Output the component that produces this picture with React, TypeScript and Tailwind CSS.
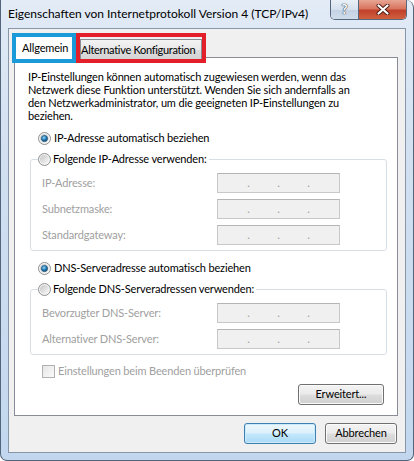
import type { ReactNode } from 'react';

const FONT = "font-['Lato',sans-serif]";

function Radio({ checked = false }: { checked?: boolean }) {
  return (
    <svg width="13" height="13" viewBox="0 0 13 13" className="shrink-0">
      <defs>
        <linearGradient id="radio-well" x1="0" y1="0" x2="1" y2="1">
          <stop offset="0" stopColor="#c4c4c4" />
          <stop offset="1" stopColor="#fbfbfb" />
        </linearGradient>
        <radialGradient id="radio-dot" cx="0.4" cy="0.35" r="0.75">
          <stop offset="0" stopColor="#9fd6f5" />
          <stop offset="0.45" stopColor="#2a86c0" />
          <stop offset="1" stopColor="#0b3555" />
        </radialGradient>
      </defs>
      <circle cx="6.5" cy="6.5" r="6" fill="#f5f5f5" stroke="#8e8f8f" />
      <circle cx="6.5" cy="6.5" r="4.6" fill="url(#radio-well)" />
      {checked && <circle cx="6.5" cy="6.5" r="3.1" fill="url(#radio-dot)" stroke="#174f78" strokeWidth="0.7" />}
    </svg>
  );
}

function IpBox() {
  return (
    <div className="w-[123px] h-[20px] border border-[#c8c8c8] border-t-[#b5b5b5] bg-[#f0f0f0] flex justify-center text-[#a0a0a0] leading-[17px]">
      <span className="w-[30px] text-center">.</span>
      <span className="w-[30px] text-center">.</span>
      <span className="w-[30px] text-center">.</span>
    </div>
  );
}

function Field({ label }: { label: string }) {
  return (
    <div className="flex items-center h-[20px]">
      <span className="w-[186px] pl-[11px] text-[#a0a0a0] whitespace-nowrap">{label}</span>
      <IpBox />
    </div>
  );
}

function Group({ legend, fields }: { legend: string; fields: string[] }) {
  return (
    <fieldset className="ml-[2px] w-[357px] border border-[#d5dfe5] rounded-[3px] min-w-0">
      <legend className="ml-[7px] pr-[2px] h-[16px] flex items-center gap-[2px] bg-white whitespace-nowrap">
        <Radio />
        <span>{legend}</span>
      </legend>
      <div className="flex flex-col gap-[6px] pt-[6px] pb-[5px]">
        {fields.map((f) => (
          <Field key={f} label={f} />
        ))}
      </div>
    </fieldset>
  );
}

function WinButton({ children, primary, className = '' }: { children: ReactNode; primary?: boolean; className?: string }) {
  const look = primary
    ? 'border-[#3c7fb1] bg-[linear-gradient(180deg,#edf7fd_0%,#dcf1fc_48%,#c2e7fb_52%,#abdaf6_100%)] shadow-[inset_0_0_0_1px_#cbeafb]'
    : 'border-[#707070] bg-[linear-gradient(180deg,#f3f3f3_0%,#ebebeb_48%,#dddddd_52%,#d0d0d0_100%)] shadow-[inset_0_0_0_1px_#fbfbfb]';
  return (
    <button className={`h-[21px] rounded-[3px] border text-black flex items-center justify-center ${look} ${className}`}>
      {children}
    </button>
  );
}

export default function App() {
  return (
    <div
      className={`${FONT} text-[11px] tracking-[-0.15px] text-black w-[414px] h-[461px] flex flex-col border-x border-b border-[#52657b] rounded-b-[7px] rounded-tr-[8px] overflow-hidden bg-[linear-gradient(180deg,#e2ebf6_0%,#d3e1f1_30%,#c2d7ee_100%)]`}
    >
      {/* Title bar */}
      <div className="h-[28px] flex items-start shrink-0">
        <span className="pl-[7px] pt-[5px] text-[12px] tracking-normal leading-[18px] whitespace-nowrap">
          Eigenschaften von Internetprotokoll Version 4 (TCP/IPv4)
        </span>
        <div className="ml-auto mr-[6px] flex border border-t-0 border-[#56687e] rounded-b-[5px] overflow-hidden">
          <div className="w-[28px] h-[19px] flex items-center justify-center border-r border-[#56687e] bg-[linear-gradient(180deg,#e9eff6_0%,#d6e1ee_50%,#c3d2e3_52%,#cfdcea_100%)]">
            <span className="text-white font-bold text-[13px] leading-none [text-shadow:0_0_1px_#3b4a5c,0_0_1px_#3b4a5c,0_0_1px_#3b4a5c]">?</span>
          </div>
          <div className="w-[47px] h-[19px] flex items-center justify-center bg-[linear-gradient(180deg,#e8a493_0%,#d8755f_45%,#c1412a_55%,#d0613f_100%)]">
            <svg width="14" height="11" viewBox="0 0 14 11">
              <path d="M2.5 1.5 L11.5 9.5 M11.5 1.5 L2.5 9.5" stroke="#4a1c14" strokeWidth="4" strokeLinecap="round" />
              <path d="M2.5 1.5 L11.5 9.5 M11.5 1.5 L2.5 9.5" stroke="#ffffff" strokeWidth="2.2" strokeLinecap="round" />
            </svg>
          </div>
        </div>
      </div>

      {/* Client area */}
      <div className="mx-[7px] h-[425px] border border-[#8796a8] bg-[#f0f0f0] flex flex-col shrink-0">
        {/* Tabs */}
        <div className="h-[24px] mt-[4px] ml-[3px] flex items-start relative z-10">
          <div className="w-[64px] h-[30px] border-[4px] border-[#1a9ad8] bg-white pl-[6px] leading-[21px] whitespace-nowrap">
            Allgemein
          </div>
          <div className="w-[130px] h-[30px] border-[4px] border-[#e3202a] pt-[2px] bg-[#f0f0f0]">
            <div className="h-[20px] border border-b-0 border-[#898c95] bg-[linear-gradient(180deg,#f3f3f3_0%,#e8e8e8_50%,#dcdcdc_52%,#d4d4d4_100%)] leading-[19px] tracking-[-0.3px] whitespace-nowrap overflow-hidden">
              Alternative Konfiguration
            </div>
          </div>
        </div>

        {/* Panel */}
        <div className="ml-[5px] w-[384px] h-[359px] border border-[#898c95] bg-white px-[13px] pt-[12px] flex flex-col">
          <p className="leading-[13px] whitespace-nowrap">
            IP-Einstellungen können automatisch zugewiesen werden, wenn das
            <br />
            Netzwerk diese Funktion unterstützt. Wenden Sie sich andernfalls an
            <br />
            den Netzwerkadministrator, um die geeigneten IP-Einstellungen zu
            <br />
            beziehen.
          </p>

          <div className="mt-[8px] ml-[10px] h-[16px] flex items-center gap-[3px]">
            <Radio checked />
            <span>IP-Adresse automatisch beziehen</span>
          </div>
          <div className="mt-[5px]">
            <Group legend="Folgende IP-Adresse verwenden:" fields={['IP-Adresse:', 'Subnetzmaske:', 'Standardgateway:']} />
          </div>

          <div className="mt-[9px] ml-[10px] h-[16px] flex items-center gap-[3px]">
            <Radio checked />
            <span>DNS-Serveradresse automatisch beziehen</span>
          </div>
          <div className="mt-[5px]">
            <Group legend="Folgende DNS-Serveradressen verwenden:" fields={['Bevorzugter DNS-Server:', 'Alternativer DNS-Server:']} />
          </div>

          <div className="mt-[8px] ml-[14px] h-[16px] flex items-center gap-[3px] text-[#a0a0a0]">
            <span className="w-[13px] h-[13px] border border-[#b1b1b1] bg-[linear-gradient(135deg,#e6e6e6,#fafafa)]" />
            <span>Einstellungen beim Beenden überprüfen</span>
          </div>

          <div className="mt-[5px] flex justify-end">
            <WinButton className="w-[86px]">Erweitert...</WinButton>
          </div>
        </div>

        {/* Dialog buttons */}
        <div className="mt-[7px] mr-[8px] flex justify-end gap-[9px]">
          <WinButton primary className="w-[72px] h-[21px]">OK</WinButton>
          <WinButton className="w-[72px] h-[21px]">Abbrechen</WinButton>
        </div>
      </div>
    </div>
  );
}
